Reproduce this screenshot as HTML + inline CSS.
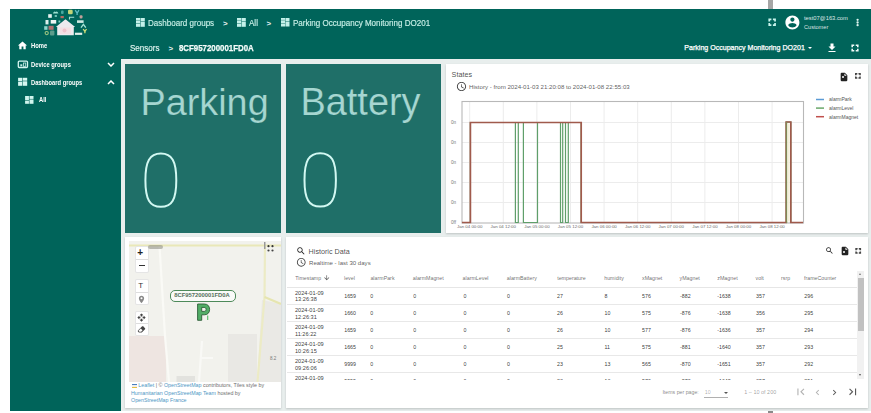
<!DOCTYPE html>
<html><head><meta charset="utf-8">
<style>
*{margin:0;padding:0;box-sizing:border-box}
html,body{width:871px;height:413px;overflow:hidden;background:#fff;font-family:"Liberation Sans",sans-serif}
.a{position:absolute}
.t{white-space:nowrap;line-height:1}
svg{display:block}
</style></head><body>
<div class="a" style="left:768px;top:0;width:5px;height:9px;background:#a6a6a6"></div>
<div class="a" style="left:10px;top:9px;width:861px;height:402px;background:#00645a"></div>
<div class="a" style="left:768px;top:411px;width:5px;height:2px;background:#8a8a8a"></div>
<svg class="a" style="left:136.2px;top:18.1px" width="9.8" height="9.8"><g fill="#c4f1ea"><rect x="0.00" y="0.00" width="4.20" height="1.96"/><rect x="0.00" y="2.35" width="4.20" height="2.93"/><rect x="0.00" y="5.67" width="4.20" height="3.13"/><rect x="4.60" y="0.00" width="4.20" height="3.32"/><rect x="4.60" y="3.72" width="4.20" height="5.08"/></g></svg>
<div class="a t" style="left:148px;top:19.2px;font-size:8.7px;color:#c8efe7;font-weight:normal;-webkit-text-stroke:0.15px #c8efe7;transform:scaleX(0.925);transform-origin:0 0">Dashboard groups</div>
<div class="a t" style="left:223px;top:20.0px;font-size:8px;color:rgba(255,255,255,0.92);font-weight:bold;">&gt;</div>
<svg class="a" style="left:237.1px;top:18.1px" width="9.8" height="9.8"><g fill="#c4f1ea"><rect x="0.00" y="0.00" width="4.20" height="1.96"/><rect x="0.00" y="2.35" width="4.20" height="2.93"/><rect x="0.00" y="5.67" width="4.20" height="3.13"/><rect x="4.60" y="0.00" width="4.20" height="3.32"/><rect x="4.60" y="3.72" width="4.20" height="5.08"/></g></svg>
<div class="a t" style="left:249px;top:19.2px;font-size:8.7px;color:#c8efe7;font-weight:normal;-webkit-text-stroke:0.15px #c8efe7;transform:scaleX(0.925);transform-origin:0 0">All</div>
<div class="a t" style="left:266.5px;top:20.0px;font-size:8px;color:rgba(255,255,255,0.92);font-weight:bold;">&gt;</div>
<svg class="a" style="left:281.3px;top:18.1px" width="9.5" height="9.5"><g fill="#c4f1ea"><rect x="0.00" y="0.00" width="4.06" height="1.89"/><rect x="0.00" y="2.27" width="4.06" height="2.83"/><rect x="0.00" y="5.48" width="4.06" height="3.02"/><rect x="4.44" y="0.00" width="4.06" height="3.21"/><rect x="4.44" y="3.59" width="4.06" height="4.91"/></g></svg>
<div class="a t" style="left:293px;top:19.2px;font-size:8.7px;color:#c8efe7;font-weight:normal;-webkit-text-stroke:0.15px #c8efe7;transform:scaleX(0.925);transform-origin:0 0">Parking Occupancy Monitoring DO201</div>
<svg class="a" style="left:0;top:0" width="871" height="413"><path d="M769.25 21.5 V19.35 H771.4 M772.9 19.35 H775.05 V21.5 M775.05 23.0 V25.15 H772.9 M771.4 25.15 H769.25 V23.0" stroke="#c8f3ec" stroke-width="1.7" fill="none"/></svg>
<svg class="a" style="left:784.1px;top:14.3px" width="16.8" height="16.8" viewBox="0 0 24 24"><path fill="#fff" d="M12 2C6.48 2 2 6.48 2 12s4.48 10 10 10 10-4.48 10-10S17.52 2 12 2zm0 3c1.66 0 3 1.34 3 3s-1.34 3-3 3-3-1.34-3-3 1.34-3 3-3zm0 14.2c-2.5 0-4.71-1.28-6-3.22.03-1.99 4-3.08 6-3.08 1.99 0 5.970 1.09 6 3.08-1.29 1.94-3.5 3.22-6 3.22z"/></svg>
<div class="a t" style="left:804px;top:15.5px;font-size:5.8px;color:rgba(255,255,255,0.88);font-weight:normal;">test07@163.com</div>
<div class="a t" style="left:804px;top:24.5px;font-size:5.6px;color:rgba(255,255,255,0.85);font-weight:normal;">Customer</div>
<svg class="a" style="left:0;top:0" width="871" height="413"><g fill="#dff5f0"><circle cx="857.6" cy="19.8" r="1.15"/><circle cx="857.6" cy="22.5" r="1.15"/><circle cx="857.6" cy="25.2" r="1.15"/></g></svg>
<div class="a t" style="left:129.6px;top:43.9px;font-size:8.7px;color:#e2f6f2;font-weight:normal;-webkit-text-stroke:0.15px #e2f6f2;transform:scaleX(0.925);transform-origin:0 0">Sensors</div>
<div class="a t" style="left:168.4px;top:44.7px;font-size:8px;color:rgba(255,255,255,0.92);font-weight:bold;">&gt;</div>
<div class="a t" style="left:179px;top:43.9px;font-size:8.7px;color:#f4fcfa;font-weight:bold;-webkit-text-stroke:0.25px #f4fcfa;transform:scaleX(0.905);transform-origin:0 0">8CF957200001FD0A</div>
<div class="a t" style="left:684.3px;top:44.2px;font-size:7.07px;color:#fff;font-weight:normal;-webkit-text-stroke:0.25px #fff">Parking Occupancy Monitoring DO201</div>
<div class="a" style="left:808px;top:46.5px;width:0;height:0;border-left:2px solid transparent;border-right:2px solid transparent;border-top:2px solid #fff"></div>
<svg class="a" style="left:826.3px;top:41.6px" width="12" height="12" viewBox="0 0 24 24"><path fill="#fff" d="M19 9h-4V3H9v6H5l7 7 7-7zM5 18v2h14v-2H5z"/></svg>
<svg class="a" style="left:0;top:0" width="871" height="413"><path d="M852.1999999999999 47.28 V45.199999999999996 H854.28 M855.72 45.199999999999996 H857.8000000000001 V47.28 M857.8000000000001 48.72 V50.800000000000004 H855.72 M854.28 50.800000000000004 H852.1999999999999 V48.72" stroke="#f0fbf9" stroke-width="1.6" fill="none"/></svg>
<svg class="a" style="left:17.3px;top:40px" width="11" height="11" viewBox="0 0 24 24"><path fill="#fff" d="M10 20v-6h4v6h5v-8h3L12 3 2 12h3v8z"/></svg>
<div class="a t" style="left:31.3px;top:42.8px;font-size:6.5px;color:#fff;font-weight:bold;transform:scaleX(0.9);transform-origin:0 0">Home</div>
<svg class="a" style="left:0;top:0" width="871" height="413"><rect x="18.3" y="61.1" width="9.2" height="6.4" rx="1" fill="none" stroke="#d6f5f0" stroke-width="1.3"/><rect x="20.3" y="64.3" width="2" height="2" fill="#c6ebe5"/><rect x="23.5" y="63" width="2.2" height="3.3" fill="none" stroke="#c6ebe5" stroke-width="0.8"/></svg>
<div class="a t" style="left:31px;top:61.5px;font-size:6.5px;color:#fff;font-weight:bold;transform:scaleX(0.89);transform-origin:0 0">Device groups</div>
<svg class="a" style="left:107px;top:61.5px" width="8" height="5"><path d="M1 1 L4 4 L7 1" stroke="#fff" stroke-width="1.5" fill="none"/></svg>
<svg class="a" style="left:0;top:0" width="871" height="413"><g fill="#d6f7f1"><rect x="18.10" y="77.80" width="3.93" height="3.33"/><rect x="18.10" y="81.68" width="3.93" height="4.12"/><rect x="22.57" y="77.80" width="4.62" height="2.92"/><rect x="22.57" y="81.28" width="4.62" height="4.52"/></g></svg>
<div class="a t" style="left:31px;top:79.8px;font-size:6.5px;color:#fff;font-weight:bold;transform:scaleX(0.885);transform-origin:0 0">Dashboard groups</div>
<svg class="a" style="left:106.5px;top:79.5px" width="8" height="5"><path d="M1 4 L4 1 L7 4" stroke="#fff" stroke-width="1.5" fill="none"/></svg>
<svg class="a" style="left:0;top:0" width="871" height="413"><g fill="#d0f5ee"><rect x="25.10" y="96.00" width="3.82" height="4.12"/><rect x="25.10" y="100.68" width="3.82" height="3.12"/><rect x="29.47" y="96.00" width="4.03" height="2.92"/><rect x="29.47" y="99.48" width="4.03" height="4.32"/></g></svg>
<div class="a t" style="left:39px;top:97.3px;font-size:6.5px;color:#fff;font-weight:bold;transform:scaleX(0.89);transform-origin:0 0">All</div>
<svg class="a" style="left:0;top:0;filter:blur(0.35px)" width="100" height="40" viewBox="0 0 100 40">
<path d="M55.8 27 L65.5 19.2 L75.2 27 L73.8 27 L73.8 35.2 L57.2 35.2 L57.2 27 Z" fill="#eceaee"/>
<path d="M60 27.5 L71 27.5 L71 34 L60 34 Z" fill="#f3dfe3"/>
<circle cx="64.5" cy="30.5" r="2" fill="#eec2cb"/>
<path d="M52.9 13.5 q1 -2.8 2.8 -1.6 q1.6 -1.2 2.7 1.6 z" fill="#9ee0d2"/>
<rect x="61" y="10.5" width="2.6" height="3.5" rx="1" fill="#4aa8a0"/>
<rect x="68" y="9.8" width="4.7" height="4.4" rx="1.3" fill="#c2d478"/>
<path d="M75.2 10.2 L77.1 13 L79 10.2 M77.1 13 L77.1 14.9" stroke="#62bcc4" stroke-width="1.3" fill="none"/>
<rect x="48.2" y="14.2" width="3.6" height="3.6" fill="#e6f2f0"/>
<rect x="54.7" y="15" width="2.2" height="2" fill="#6fc0b4"/>
<rect x="60.5" y="16" width="3.3" height="2.2" fill="#b86a62"/>
<path d="M69.5 19.6 L69.5 17.2 L74.2 17.2" stroke="#a8e2d8" stroke-width="1.1" fill="none"/>
<rect x="79.6" y="15.3" width="2.9" height="3.2" rx="1" fill="#c0a09a"/>
<rect x="45.5" y="20" width="3" height="4.4" fill="#dcefec"/>
<rect x="50.7" y="20" width="5.5" height="3.6" fill="#eef6f4"/>
<rect x="58.5" y="20.5" width="1.8" height="2" fill="#80cfc4"/>
<rect x="77" y="20.3" width="6.6" height="2.6" fill="#cfeae4"/>
<rect x="44.2" y="26.2" width="3.3" height="3.6" fill="#8ed6cc"/>
<rect x="48.5" y="25.8" width="5.1" height="4" fill="#b07272"/>
<path d="M81 27.6 L83.4 24.3 L85.8 27.6" stroke="#a6e4d6" stroke-width="1.3" fill="none"/>
<circle cx="46.7" cy="33.1" r="1.6" fill="none" stroke="#9cc680" stroke-width="1.1"/>
<rect x="50" y="30.5" width="4.4" height="5.1" rx="1" fill="#5c9c8c"/>
<rect x="74.9" y="32.7" width="7.3" height="2.2" fill="#e2f0ea"/>
<path d="M83.2 29 L84.9 31.5 L86.5 29 M84.9 31.5 L84.9 33.2" stroke="#cede78" stroke-width="1.3" fill="none"/>
</svg>
<div class="a" style="left:121px;top:58.8px;width:750px;height:352.2px;background:#e8eeed"></div>
<div class="a" style="left:125px;top:63.5px;width:156px;height:169px;background:#1f6f68"></div>
<div class="a" style="left:286px;top:63.5px;width:155px;height:169px;background:#1f6f68"></div>
<div class="a" style="left:446px;top:63.5px;width:422px;height:169.5px;background:#fff;box-shadow:0 1px 2px rgba(0,0,0,0.18)"></div>
<div class="a" style="left:125px;top:237px;width:156px;height:170.5px;background:#fff;box-shadow:0 1px 2px rgba(0,0,0,0.18)"></div>
<div class="a" style="left:286px;top:237px;width:582px;height:170.5px;background:#fff;box-shadow:0 1px 2px rgba(0,0,0,0.18)"></div>
<div class="a t" style="left:140.5px;top:84.2px;font-size:37.8px;color:#a6d6d1;font-weight:normal;-webkit-text-stroke:0.2px #1f6f68">Parking</div>
<div class="a t" style="left:300.5px;top:84.0px;font-size:37.9px;color:#a6d6d1;font-weight:normal;-webkit-text-stroke:0.2px #1f6f68">Battery</div>
<svg class="a" style="left:0;top:0" width="871" height="413"><path d="M160.85 153.60 C171.97 153.60 176.30 161.05 176.30 180.20 C176.30 199.35 171.97 206.80 160.85 206.80 C149.73 206.80 145.40 199.35 145.40 180.20 C145.40 161.05 149.73 153.60 160.85 153.60Z" fill="none" stroke="#d2f8f2" stroke-width="2.0"/><path d="M320.20 153.20 C331.50 153.20 335.90 160.68 335.90 179.90 C335.90 199.12 331.50 206.60 320.20 206.60 C308.90 206.60 304.50 199.12 304.50 179.90 C304.50 160.68 308.90 153.20 320.20 153.20Z" fill="none" stroke="#d2f8f2" stroke-width="2.0"/></svg>
<div class="a t" style="left:451.6px;top:70.5px;font-size:7.2px;color:rgba(0,0,0,0.72);font-weight:normal;">States</div>
<svg class="a" style="left:839.3px;top:71.5px" width="10" height="10" viewBox="0 0 24 24"><path fill="#222" d="M14 2H6c-1.1 0-2 .9-2 2v16c0 1.1.9 2 2 2h12c1.1 0 2-.9 2-2V8l-6-6zm-1 7V3.5L18.5 9H13z"/></svg>
<div class="a" style="left:842.3px;top:76.3px;width:2.2px;height:2.2px;border-radius:50%;background:#fff"></div>
<svg class="a" style="left:0;top:0" width="871" height="413"><path d="M855.75 75.32 V73.75 H857.32 M858.4799999999999 73.75 H860.05 V75.32 M860.05 76.48 V78.05 H858.4799999999999 M857.32 78.05 H855.75 V76.48" stroke="#444" stroke-width="1.5" fill="none"/></svg>
<svg class="a" style="left:455.9px;top:81.2px" width="11" height="11" viewBox="0 0 24 24"><path fill="#444" d="M11.99 2C6.47 2 2 6.48 2 12s4.47 10 9.99 10C17.52 22 22 17.52 22 12S17.52 2 11.99 2zM12 20c-4.42 0-8-3.58-8-8s3.58-8 8-8 8 3.58 8 8-3.58 8-8 8zm.5-13H11v6l5.25 3.15.75-1.23-4.5-2.67z"/></svg>
<div class="a t" style="left:469px;top:84px;font-size:6.14px;color:rgba(0,0,0,0.68);font-weight:normal;">History - from 2024-01-03 21:20:08 to 2024-01-08 22:55:03</div>
<svg class="a" style="left:0;top:0" width="871" height="413"><line x1="469.7" y1="102" x2="469.7" y2="223" stroke="#ececec" stroke-width="1"/><line x1="503.3" y1="102" x2="503.3" y2="223" stroke="#ececec" stroke-width="1"/><line x1="536.9" y1="102" x2="536.9" y2="223" stroke="#ececec" stroke-width="1"/><line x1="570.5" y1="102" x2="570.5" y2="223" stroke="#ececec" stroke-width="1"/><line x1="604.1" y1="102" x2="604.1" y2="223" stroke="#ececec" stroke-width="1"/><line x1="637.7" y1="102" x2="637.7" y2="223" stroke="#ececec" stroke-width="1"/><line x1="671.3" y1="102" x2="671.3" y2="223" stroke="#ececec" stroke-width="1"/><line x1="704.9" y1="102" x2="704.9" y2="223" stroke="#ececec" stroke-width="1"/><line x1="738.5" y1="102" x2="738.5" y2="223" stroke="#ececec" stroke-width="1"/><line x1="772.1" y1="102" x2="772.1" y2="223" stroke="#ececec" stroke-width="1"/><line x1="462" y1="122.5" x2="803" y2="122.5" stroke="#ececec" stroke-width="1"/><line x1="462" y1="142.5" x2="803" y2="142.5" stroke="#ececec" stroke-width="1"/><line x1="462" y1="162.5" x2="803" y2="162.5" stroke="#ececec" stroke-width="1"/><line x1="462" y1="182.5" x2="803" y2="182.5" stroke="#ececec" stroke-width="1"/><line x1="462" y1="202.5" x2="803" y2="202.5" stroke="#ececec" stroke-width="1"/><rect x="462" y="101.5" width="341.5" height="121.5" fill="none" stroke="#b8b8b8" stroke-width="1.1"/><text x="451" y="123.8" font-size="4.6" fill="#777" font-family="Liberation Sans">0n</text><text x="451" y="143.8" font-size="4.6" fill="#777" font-family="Liberation Sans">0n</text><text x="451" y="163.8" font-size="4.6" fill="#777" font-family="Liberation Sans">0n</text><text x="451" y="183.8" font-size="4.6" fill="#777" font-family="Liberation Sans">0n</text><text x="451" y="203.8" font-size="4.6" fill="#777" font-family="Liberation Sans">0n</text><text x="451" y="223.8" font-size="4.6" fill="#777" font-family="Liberation Sans">0ff</text><text x="469.7" y="227.8" font-size="4.4" fill="#6a6a6a" text-anchor="middle" font-family="Liberation Sans">Jan 04 00:00</text><text x="503.3" y="227.8" font-size="4.4" fill="#6a6a6a" text-anchor="middle" font-family="Liberation Sans">Jan 04 12:00</text><text x="536.9" y="227.8" font-size="4.4" fill="#6a6a6a" text-anchor="middle" font-family="Liberation Sans">Jan 05 00:00</text><text x="570.5" y="227.8" font-size="4.4" fill="#6a6a6a" text-anchor="middle" font-family="Liberation Sans">Jan 05 12:00</text><text x="604.1" y="227.8" font-size="4.4" fill="#6a6a6a" text-anchor="middle" font-family="Liberation Sans">Jan 06 00:00</text><text x="637.7" y="227.8" font-size="4.4" fill="#6a6a6a" text-anchor="middle" font-family="Liberation Sans">Jan 06 12:00</text><text x="671.3" y="227.8" font-size="4.4" fill="#6a6a6a" text-anchor="middle" font-family="Liberation Sans">Jan 07 00:00</text><text x="704.9" y="227.8" font-size="4.4" fill="#6a6a6a" text-anchor="middle" font-family="Liberation Sans">Jan 07 12:00</text><text x="738.5" y="227.8" font-size="4.4" fill="#6a6a6a" text-anchor="middle" font-family="Liberation Sans">Jan 08 00:00</text><text x="772.1" y="227.8" font-size="4.4" fill="#6a6a6a" text-anchor="middle" font-family="Liberation Sans">Jan 08 12:00</text><polyline fill="none" stroke="#5f9f6a" stroke-width="1.2" points="462,222.5 470.4,222.5 470.4,122.5 515.4,122.5 515.4,222.5 518.3,222.5 518.3,122.5 523.4,122.5 523.4,222.5 537.5,222.5 537.5,122.5 560.5,122.5 560.5,222.5 562.7,222.5 562.7,122.5 565.5,122.5 565.5,222.5 568.3,222.5 568.3,122.5 581.2,122.5 581.2,222.5 786.2,222.5 786.2,122 790.8,122 790.8,222.5 803,222.5"/><polyline fill="none" stroke="#a05a4c" stroke-width="1.7" points="462,222.5 470.4,222.5 470.4,122.5 581.2,122.5 581.2,222.5 786.2,222.5 786.2,122 790.8,122 790.8,222.5 803,222.5"/><line x1="816" y1="99.5" x2="824" y2="99.5" stroke="#5b9bd5" stroke-width="1.5"/><text x="829" y="101.3" font-size="5" fill="#555" font-family="Liberation Sans">alarmPark</text><line x1="816" y1="108.1" x2="824" y2="108.1" stroke="#6aa86a" stroke-width="1.5"/><text x="829" y="109.89999999999999" font-size="5" fill="#555" font-family="Liberation Sans">alarmLevel</text><line x1="816" y1="116.7" x2="824" y2="116.7" stroke="#c0504d" stroke-width="1.5"/><text x="829" y="118.5" font-size="5" fill="#555" font-family="Liberation Sans">alarmMagnet</text><line x1="786.6" y1="122" x2="786.6" y2="223" stroke="#7f8a55" stroke-width="1.3"/><line x1="788.5" y1="123.5" x2="788.5" y2="221.5" stroke="#f3f0d8" stroke-width="2.2"/></svg>
<svg class="a" style="left:129px;top:241px" width="152" height="141" viewBox="129 241 152 141"><rect x="129" y="241" width="152" height="141" fill="#f2f2ed"/><path d="M129 336 L166 336 L166 382 L129 382 Z" fill="#eee5e1"/><path d="M176.5 376 L195 376 L195 382 L176.5 382 Z" fill="#e2e2de"/><path d="M228 334 L257 334 L257 382 L228 382 Z" fill="#e9e8e4"/><path d="M262 300 L281 304 L281 382 L257 382 Z" fill="#eae9e5"/><path d="M159.5 246 L165 336 L169 382" stroke="#fafaf6" stroke-width="2.2" fill="none"/><path d="M202 341 L199 382 M200 358 L213 358" stroke="#f9f9f6" stroke-width="2.2" fill="none"/><path d="M129 245.5 L264 245.5 L281 245.5" stroke="#e9e8b8" stroke-width="2.2" fill="none"/><path d="M265 246 L264.5 297 L257.5 382" stroke="#ecebc5" stroke-width="2.2" fill="none"/><path d="M264.5 297 L281 304" stroke="#e6e5b0" stroke-width="2.2" fill="none"/></svg>
<div class="a t" style="left:270px;top:357px;font-size:4.5px;color:#777;font-weight:normal;">8.2</div>
<div class="a" style="left:134.5px;top:246px;width:14px;height:27px;background:#fff;border:1px solid rgba(0,0,0,0.1);border-radius:2px"></div>
<div class="a" style="left:135.5px;top:259.3px;width:12px;height:1px;background:#ddd"></div>
<div class="a t" style="left:137.3px;top:247.8px;font-size:10px;color:#222;font-weight:bold;">+</div>
<div class="a" style="left:138.5px;top:265px;width:6px;height:1.4px;background:#333"></div>
<div class="a" style="left:134.5px;top:279px;width:14px;height:26px;background:#fff;border:1px solid rgba(0,0,0,0.1);border-radius:2px"></div>
<div class="a" style="left:135.5px;top:292px;width:12px;height:1px;background:#ddd"></div>
<div class="a t" style="left:138.3px;top:281.5px;font-size:8px;color:#333;font-weight:normal;">T</div>
<svg class="a" style="left:138px;top:294.5px" width="7" height="9" viewBox="0 0 24 30"><path d="M12 2C7 2 3 6 3 11c0 7 9 17 9 17s9-10 9-17c0-5-4-9-9-9zm0 12.5a3.5 3.5 0 1 1 0-7 3.5 3.5 0 0 1 0 7z" fill="#888"/></svg>
<div class="a" style="left:134.5px;top:310.5px;width:14px;height:25px;background:#fff;border:1px solid rgba(0,0,0,0.1);border-radius:2px"></div>
<div class="a" style="left:135.5px;top:323px;width:12px;height:1px;background:#ddd"></div>
<svg class="a" style="left:137px;top:312.5px" width="9" height="9" viewBox="0 0 24 24"><path d="M10 9h4V6h3l-5-5-5 5h3v3zm-1 1H6V7l-5 5 5 5v-3h3v-4zm14 2l-5-5v3h-3v4h3v3l5-5zm-9 3h-4v3H7l5 5 5-5h-3v-3z" fill="#444"/></svg>
<svg class="a" style="left:137px;top:325px" width="9" height="9" viewBox="0 0 24 24"><path d="M15.14 3c-.51 0-1.02.2-1.41.59L2.59 14.73c-.78.77-.78 2.04 0 2.83L5.03 20h7.66l8.72-8.73c.78-.77.78-2.04 0-2.83l-4.85-4.85c-.39-.39-.91-.59-1.42-.59zM6.44 18.2L4 15.66l6.04-6.04 4.7 4.7-3.72 3.88H6.44z" fill="#444"/></svg>
<svg class="a" style="left:262px;top:241px" width="14" height="13"><rect x="2" y="1" width="1.5" height="7" fill="#999"/><circle cx="6.5" cy="5.2" r="1.1" fill="#333"/><circle cx="10.5" cy="5.2" r="1.1" fill="#333"/><circle cx="6.5" cy="9.5" r="1.1" fill="#444"/><circle cx="10.5" cy="9.5" r="1.1" fill="#444"/></svg>
<div class="a" style="left:148.3px;top:244.6px;width:14.5px;height:4.2px;background:#8a8a80;border-radius:2px;opacity:0.55"></div>
<div class="a" style="left:169.8px;top:289.7px;width:66px;height:12px;border:1.5px solid #4e8a5a;border-radius:5px;background:rgba(255,255,255,0.6)"></div>
<div class="a t" style="left:174.2px;top:293px;font-size:5.85px;color:#56705c;font-weight:bold;">8CF957200001FD0A</div>
<svg class="a" style="left:0;top:0" width="871" height="413"><path fill-rule="evenodd" d="M197.6 304 H204.4 C207.8 304 209.6 306.4 209.6 309.4 C209.6 312.5 207.8 314.8 204.4 314.8 H201.7 V320.3 H197.6 Z M201.7 307.4 H204.1 C205.4 307.4 206.1 308.3 206.1 309.4 C206.1 310.5 205.4 311.4 204.1 311.4 H201.7 Z" fill="#52ad66" stroke="#2c5e38" stroke-width="0.9"/><rect x="207" y="315.5" width="1.3" height="4.5" fill="#6cc47c"/></svg>
<div class="a" style="left:131.5px;top:384.2px;width:5.5px;height:3.6px;background:linear-gradient(#4a7fc0 33%,#eee 33%,#eee 66%,#e8c040 66%)"></div>
<div class="a t" style="left:138.3px;top:383.2px;font-size:5.32px;color:#6e6e6e"><span style="color:#4f97c4">Leaflet</span> | © <span style="color:#4f97c4">OpenStreetMap</span> contributors, Tiles style by</div>
<div class="a t" style="left:131px;top:390.6px;font-size:5.32px;color:#6e6e6e"><span style="color:#4f97c4">Humanitarian OpenStreetMap Team</span> hosted by</div>
<div class="a t" style="left:131px;top:397.8px;font-size:5.32px;color:#4f97c4">OpenStreetMap France</div>
<svg class="a" style="left:296px;top:246.2px" width="10" height="10" viewBox="0 0 24 24"><path fill="#222" d="M15.5 14h-.79l-.28-.27C15.41 12.59 16 11.11 16 9.5 16 5.91 13.09 3 9.5 3S3 5.91 3 9.5 5.91 16 9.5 16c1.61 0 3.090-.59 4.23-1.57l.27.28v.79l5 4.99L20.49 19l-4.99-5zm-6 0C7.01 14 5 11.99 5 9.5S7.01 5 9.5 5 14 7.01 14 9.5 11.99 14 9.5 14z"/></svg>
<div class="a t" style="left:308.6px;top:247.5px;font-size:7.2px;color:rgba(0,0,0,0.72);font-weight:normal;">Historic Data</div>
<svg class="a" style="left:296.2px;top:257.3px" width="10.5" height="10.5" viewBox="0 0 24 24"><path fill="#444" d="M11.99 2C6.47 2 2 6.48 2 12s4.47 10 9.99 10C17.52 22 22 17.52 22 12S17.52 2 11.99 2zM12 20c-4.42 0-8-3.58-8-8s3.58-8 8-8 8 3.58 8 8-3.58 8-8 8zm.5-13H11v6l5.25 3.15.75-1.23-4.5-2.67z"/></svg>
<div class="a t" style="left:309px;top:260px;font-size:6.07px;color:rgba(0,0,0,0.68);font-weight:normal;">Realtime - last 30 days</div>
<svg class="a" style="left:825.2px;top:246.3px" width="9" height="9" viewBox="0 0 24 24"><path fill="#222" d="M15.5 14h-.79l-.28-.27C15.41 12.59 16 11.11 16 9.5 16 5.91 13.09 3 9.5 3S3 5.91 3 9.5 5.91 16 9.5 16c1.61 0 3.090-.59 4.23-1.57l.27.28v.79l5 4.99L20.49 19l-4.99-5zm-6 0C7.01 14 5 11.99 5 9.5S7.01 5 9.5 5 14 7.01 14 9.5 11.99 14 9.5 14z"/></svg>
<svg class="a" style="left:839.5px;top:246px" width="10" height="10" viewBox="0 0 24 24"><path fill="#222" d="M14 2H6c-1.1 0-2 .9-2 2v16c0 1.1.9 2 2 2h12c1.1 0 2-.9 2-2V8l-6-6zm-1 7V3.5L18.5 9H13z"/></svg>
<div class="a" style="left:842.5px;top:250.8px;width:2.2px;height:2.2px;border-radius:50%;background:#fff"></div>
<svg class="a" style="left:0;top:0" width="871" height="413"><path d="M856.05 250.32 V248.75 H857.62 M858.7799999999999 248.75 H860.3499999999999 V250.32 M860.3499999999999 251.48000000000002 V253.05 H858.7799999999999 M857.62 253.05 H856.05 V251.48000000000002" stroke="#444" stroke-width="1.5" fill="none"/></svg>
<div class="a t" style="left:295.2px;top:275.5px;font-size:5.3px;color:rgba(0,0,0,0.6);font-weight:normal;">Timestamp</div>
<div class="a t" style="left:344px;top:275.5px;font-size:5.3px;color:rgba(0,0,0,0.6);font-weight:normal;">level</div>
<div class="a t" style="left:370.4px;top:275.5px;font-size:5.3px;color:rgba(0,0,0,0.6);font-weight:normal;">alarmPark</div>
<div class="a t" style="left:412.8px;top:275.5px;font-size:5.3px;color:rgba(0,0,0,0.6);font-weight:normal;">alarmMagnet</div>
<div class="a t" style="left:462.6px;top:275.5px;font-size:5.3px;color:rgba(0,0,0,0.6);font-weight:normal;">alarmLevel</div>
<div class="a t" style="left:506.8px;top:275.5px;font-size:5.3px;color:rgba(0,0,0,0.6);font-weight:normal;">alarmBattery</div>
<div class="a t" style="left:557.2px;top:275.5px;font-size:5.3px;color:rgba(0,0,0,0.6);font-weight:normal;">temperature</div>
<div class="a t" style="left:604.2px;top:275.5px;font-size:5.3px;color:rgba(0,0,0,0.6);font-weight:normal;">humidity</div>
<div class="a t" style="left:642px;top:275.5px;font-size:5.3px;color:rgba(0,0,0,0.6);font-weight:normal;">xMagnet</div>
<div class="a t" style="left:679.5px;top:275.5px;font-size:5.3px;color:rgba(0,0,0,0.6);font-weight:normal;">yMagnet</div>
<div class="a t" style="left:717.3px;top:275.5px;font-size:5.3px;color:rgba(0,0,0,0.6);font-weight:normal;">zMagnet</div>
<div class="a t" style="left:755.6px;top:275.5px;font-size:5.3px;color:rgba(0,0,0,0.6);font-weight:normal;">volt</div>
<div class="a t" style="left:781px;top:275.5px;font-size:5.3px;color:rgba(0,0,0,0.6);font-weight:normal;">rsrp</div>
<div class="a t" style="left:804px;top:275.5px;font-size:5.3px;color:rgba(0,0,0,0.6);font-weight:normal;">frameCounter</div>
<svg class="a" style="left:322.6px;top:273.8px" width="7.5" height="7.5" viewBox="0 0 24 24"><path d="M20 12l-1.41-1.41L13 16.17V4h-2v12.17l-5.58-5.59L4 12l8 8 8-8z" fill="#555"/></svg>
<div class="a" style="left:287px;top:286.6px;width:570px;height:1px;background:#e6e6e6"></div>
<div class="a" style="left:286px;top:287px;width:571px;height:92.5px;overflow:hidden"><div class="a t" style="left:9px;top:3.8px;font-size:5.6px;color:rgba(0,0,0,0.8)">2024-01-09</div><div class="a t" style="left:9px;top:10.4px;font-size:5.6px;color:rgba(0,0,0,0.8)">13:26:38</div><div class="a t" style="left:58.19999999999999px;top:6.7px;font-size:5.3px;color:rgba(0,0,0,0.8)">1659</div><div class="a t" style="left:84.30000000000001px;top:6.7px;font-size:5.3px;color:rgba(0,0,0,0.8)">0</div><div class="a t" style="left:127.30000000000001px;top:6.7px;font-size:5.3px;color:rgba(0,0,0,0.8)">0</div><div class="a t" style="left:177.5px;top:6.7px;font-size:5.3px;color:rgba(0,0,0,0.8)">0</div><div class="a t" style="left:221px;top:6.7px;font-size:5.3px;color:rgba(0,0,0,0.8)">0</div><div class="a t" style="left:271.1px;top:6.7px;font-size:5.3px;color:rgba(0,0,0,0.8)">27</div><div class="a t" style="left:318.5px;top:6.7px;font-size:5.3px;color:rgba(0,0,0,0.8)">8</div><div class="a t" style="left:356px;top:6.7px;font-size:5.3px;color:rgba(0,0,0,0.8)">576</div><div class="a t" style="left:394px;top:6.7px;font-size:5.3px;color:rgba(0,0,0,0.8)">-882</div><div class="a t" style="left:431.20000000000005px;top:6.7px;font-size:5.3px;color:rgba(0,0,0,0.8)">-1638</div><div class="a t" style="left:470px;top:6.7px;font-size:5.3px;color:rgba(0,0,0,0.8)">357</div><div class="a t" style="left:518.3px;top:6.7px;font-size:5.3px;color:rgba(0,0,0,0.8)">296</div><div class="a" style="left:1px;top:17.0px;width:570px;height:1px;background:#e8e8e8"></div><div class="a t" style="left:9px;top:20.900000000000023px;font-size:5.6px;color:rgba(0,0,0,0.8)">2024-01-09</div><div class="a t" style="left:9px;top:27.50000000000002px;font-size:5.6px;color:rgba(0,0,0,0.8)">12:26:31</div><div class="a t" style="left:58.19999999999999px;top:23.800000000000022px;font-size:5.3px;color:rgba(0,0,0,0.8)">1660</div><div class="a t" style="left:84.30000000000001px;top:23.800000000000022px;font-size:5.3px;color:rgba(0,0,0,0.8)">0</div><div class="a t" style="left:127.30000000000001px;top:23.800000000000022px;font-size:5.3px;color:rgba(0,0,0,0.8)">0</div><div class="a t" style="left:177.5px;top:23.800000000000022px;font-size:5.3px;color:rgba(0,0,0,0.8)">0</div><div class="a t" style="left:221px;top:23.800000000000022px;font-size:5.3px;color:rgba(0,0,0,0.8)">0</div><div class="a t" style="left:271.1px;top:23.800000000000022px;font-size:5.3px;color:rgba(0,0,0,0.8)">26</div><div class="a t" style="left:318.5px;top:23.800000000000022px;font-size:5.3px;color:rgba(0,0,0,0.8)">10</div><div class="a t" style="left:356px;top:23.800000000000022px;font-size:5.3px;color:rgba(0,0,0,0.8)">575</div><div class="a t" style="left:394px;top:23.800000000000022px;font-size:5.3px;color:rgba(0,0,0,0.8)">-876</div><div class="a t" style="left:431.20000000000005px;top:23.800000000000022px;font-size:5.3px;color:rgba(0,0,0,0.8)">-1638</div><div class="a t" style="left:470px;top:23.800000000000022px;font-size:5.3px;color:rgba(0,0,0,0.8)">356</div><div class="a t" style="left:518.3px;top:23.800000000000022px;font-size:5.3px;color:rgba(0,0,0,0.8)">295</div><div class="a" style="left:1px;top:34.10000000000002px;width:570px;height:1px;background:#e8e8e8"></div><div class="a t" style="left:9px;top:37.999999999999986px;font-size:5.6px;color:rgba(0,0,0,0.8)">2024-01-09</div><div class="a t" style="left:9px;top:44.59999999999999px;font-size:5.6px;color:rgba(0,0,0,0.8)">11:26:22</div><div class="a t" style="left:58.19999999999999px;top:40.89999999999999px;font-size:5.3px;color:rgba(0,0,0,0.8)">1659</div><div class="a t" style="left:84.30000000000001px;top:40.89999999999999px;font-size:5.3px;color:rgba(0,0,0,0.8)">0</div><div class="a t" style="left:127.30000000000001px;top:40.89999999999999px;font-size:5.3px;color:rgba(0,0,0,0.8)">0</div><div class="a t" style="left:177.5px;top:40.89999999999999px;font-size:5.3px;color:rgba(0,0,0,0.8)">0</div><div class="a t" style="left:221px;top:40.89999999999999px;font-size:5.3px;color:rgba(0,0,0,0.8)">0</div><div class="a t" style="left:271.1px;top:40.89999999999999px;font-size:5.3px;color:rgba(0,0,0,0.8)">26</div><div class="a t" style="left:318.5px;top:40.89999999999999px;font-size:5.3px;color:rgba(0,0,0,0.8)">10</div><div class="a t" style="left:356px;top:40.89999999999999px;font-size:5.3px;color:rgba(0,0,0,0.8)">577</div><div class="a t" style="left:394px;top:40.89999999999999px;font-size:5.3px;color:rgba(0,0,0,0.8)">-876</div><div class="a t" style="left:431.20000000000005px;top:40.89999999999999px;font-size:5.3px;color:rgba(0,0,0,0.8)">-1636</div><div class="a t" style="left:470px;top:40.89999999999999px;font-size:5.3px;color:rgba(0,0,0,0.8)">357</div><div class="a t" style="left:518.3px;top:40.89999999999999px;font-size:5.3px;color:rgba(0,0,0,0.8)">294</div><div class="a" style="left:1px;top:51.19999999999999px;width:570px;height:1px;background:#e8e8e8"></div><div class="a t" style="left:9px;top:55.10000000000001px;font-size:5.6px;color:rgba(0,0,0,0.8)">2024-01-09</div><div class="a t" style="left:9px;top:61.70000000000001px;font-size:5.6px;color:rgba(0,0,0,0.8)">10:26:15</div><div class="a t" style="left:58.19999999999999px;top:58.000000000000014px;font-size:5.3px;color:rgba(0,0,0,0.8)">1665</div><div class="a t" style="left:84.30000000000001px;top:58.000000000000014px;font-size:5.3px;color:rgba(0,0,0,0.8)">0</div><div class="a t" style="left:127.30000000000001px;top:58.000000000000014px;font-size:5.3px;color:rgba(0,0,0,0.8)">0</div><div class="a t" style="left:177.5px;top:58.000000000000014px;font-size:5.3px;color:rgba(0,0,0,0.8)">0</div><div class="a t" style="left:221px;top:58.000000000000014px;font-size:5.3px;color:rgba(0,0,0,0.8)">0</div><div class="a t" style="left:271.1px;top:58.000000000000014px;font-size:5.3px;color:rgba(0,0,0,0.8)">25</div><div class="a t" style="left:318.5px;top:58.000000000000014px;font-size:5.3px;color:rgba(0,0,0,0.8)">11</div><div class="a t" style="left:356px;top:58.000000000000014px;font-size:5.3px;color:rgba(0,0,0,0.8)">575</div><div class="a t" style="left:394px;top:58.000000000000014px;font-size:5.3px;color:rgba(0,0,0,0.8)">-881</div><div class="a t" style="left:431.20000000000005px;top:58.000000000000014px;font-size:5.3px;color:rgba(0,0,0,0.8)">-1640</div><div class="a t" style="left:470px;top:58.000000000000014px;font-size:5.3px;color:rgba(0,0,0,0.8)">357</div><div class="a t" style="left:518.3px;top:58.000000000000014px;font-size:5.3px;color:rgba(0,0,0,0.8)">293</div><div class="a" style="left:1px;top:68.30000000000001px;width:570px;height:1px;background:#e8e8e8"></div><div class="a t" style="left:9px;top:72.19999999999997px;font-size:5.6px;color:rgba(0,0,0,0.8)">2024-01-09</div><div class="a t" style="left:9px;top:78.79999999999998px;font-size:5.6px;color:rgba(0,0,0,0.8)">09:26:06</div><div class="a t" style="left:58.19999999999999px;top:75.09999999999998px;font-size:5.3px;color:rgba(0,0,0,0.8)">9999</div><div class="a t" style="left:84.30000000000001px;top:75.09999999999998px;font-size:5.3px;color:rgba(0,0,0,0.8)">0</div><div class="a t" style="left:127.30000000000001px;top:75.09999999999998px;font-size:5.3px;color:rgba(0,0,0,0.8)">0</div><div class="a t" style="left:177.5px;top:75.09999999999998px;font-size:5.3px;color:rgba(0,0,0,0.8)">0</div><div class="a t" style="left:221px;top:75.09999999999998px;font-size:5.3px;color:rgba(0,0,0,0.8)">0</div><div class="a t" style="left:271.1px;top:75.09999999999998px;font-size:5.3px;color:rgba(0,0,0,0.8)">23</div><div class="a t" style="left:318.5px;top:75.09999999999998px;font-size:5.3px;color:rgba(0,0,0,0.8)">13</div><div class="a t" style="left:356px;top:75.09999999999998px;font-size:5.3px;color:rgba(0,0,0,0.8)">565</div><div class="a t" style="left:394px;top:75.09999999999998px;font-size:5.3px;color:rgba(0,0,0,0.8)">-870</div><div class="a t" style="left:431.20000000000005px;top:75.09999999999998px;font-size:5.3px;color:rgba(0,0,0,0.8)">-1651</div><div class="a t" style="left:470px;top:75.09999999999998px;font-size:5.3px;color:rgba(0,0,0,0.8)">357</div><div class="a t" style="left:518.3px;top:75.09999999999998px;font-size:5.3px;color:rgba(0,0,0,0.8)">292</div><div class="a" style="left:1px;top:85.39999999999998px;width:570px;height:1px;background:#e8e8e8"></div><div class="a t" style="left:9px;top:89.3px;font-size:5.6px;color:rgba(0,0,0,0.8)">2024-01-09</div><div class="a t" style="left:9px;top:95.9px;font-size:5.6px;color:rgba(0,0,0,0.8)">08:26:00</div><div class="a t" style="left:58.19999999999999px;top:92.2px;font-size:5.3px;color:rgba(0,0,0,0.8)">9999</div><div class="a t" style="left:84.30000000000001px;top:92.2px;font-size:5.3px;color:rgba(0,0,0,0.8)">0</div><div class="a t" style="left:127.30000000000001px;top:92.2px;font-size:5.3px;color:rgba(0,0,0,0.8)">0</div><div class="a t" style="left:177.5px;top:92.2px;font-size:5.3px;color:rgba(0,0,0,0.8)">0</div><div class="a t" style="left:221px;top:92.2px;font-size:5.3px;color:rgba(0,0,0,0.8)">0</div><div class="a t" style="left:271.1px;top:92.2px;font-size:5.3px;color:rgba(0,0,0,0.8)">23</div><div class="a t" style="left:318.5px;top:92.2px;font-size:5.3px;color:rgba(0,0,0,0.8)">13</div><div class="a t" style="left:356px;top:92.2px;font-size:5.3px;color:rgba(0,0,0,0.8)">570</div><div class="a t" style="left:394px;top:92.2px;font-size:5.3px;color:rgba(0,0,0,0.8)">-870</div><div class="a t" style="left:431.20000000000005px;top:92.2px;font-size:5.3px;color:rgba(0,0,0,0.8)">-1648</div><div class="a t" style="left:470px;top:92.2px;font-size:5.3px;color:rgba(0,0,0,0.8)">357</div><div class="a t" style="left:518.3px;top:92.2px;font-size:5.3px;color:rgba(0,0,0,0.8)">291</div><div class="a" style="left:1px;top:102.5px;width:570px;height:1px;background:#e8e8e8"></div></div>
<div class="a" style="left:857px;top:271px;width:7px;height:108px;background:#f1f1f1"></div>
<div class="a" style="left:857.5px;top:278px;width:6px;height:53px;background:#c1c1c1"></div>
<div class="a" style="left:858.7px;top:273px;width:0;height:0;border-left:1.8px solid transparent;border-right:1.8px solid transparent;border-bottom:2px solid #777"></div>
<div class="a" style="left:858.7px;top:373.5px;width:0;height:0;border-left:1.8px solid transparent;border-right:1.8px solid transparent;border-top:2px solid #555"></div>
<div class="a t" style="left:662.4px;top:389.9px;font-size:5.24px;color:rgba(0,0,0,0.5);font-weight:normal;">Items per page:</div>
<div class="a t" style="left:704.8px;top:389.9px;font-size:5.3px;color:rgba(0,0,0,0.35);font-weight:normal;">10</div>
<div class="a" style="left:704px;top:396.5px;width:24px;height:0.8px;background:#b0b0b0"></div>
<div class="a" style="left:723.5px;top:391.5px;width:0;height:0;border-left:2px solid transparent;border-right:2px solid transparent;border-top:2px solid #555"></div>
<div class="a t" style="left:744.3px;top:389.9px;font-size:5.48px;color:rgba(0,0,0,0.4);font-weight:normal;">1 – 10 of 200</div>
<svg class="a" style="left:793.7px;top:385.3px" width="13.5" height="13.5" viewBox="0 0 24 24"><path fill="rgba(0,0,0,0.3)" d="M18.41 16.59L13.82 12l4.59-4.59L17 6l-6 6 6 6zM6 6h2v12H6z"/></svg>
<svg class="a" style="left:811.5px;top:386.5px" width="11" height="11" viewBox="0 0 24 24"><path fill="rgba(0,0,0,0.3)" d="M15.41 7.41L14 6l-6 6 6 6 1.41-1.41L10.83 12z"/></svg>
<svg class="a" style="left:829px;top:386.5px" width="11" height="11" viewBox="0 0 24 24"><path fill="rgba(0,0,0,0.65)" d="M10 6L8.59 7.41 13.17 12l-4.58 4.59L10 18l6-6z"/></svg>
<svg class="a" style="left:845.9px;top:385.3px" width="13.5" height="13.5" viewBox="0 0 24 24"><path fill="rgba(0,0,0,0.65)" d="M5.59 7.41L10.18 12l-4.59 4.59L7 18l6-6-6-6zM16 6h2v12h-2z"/></svg>
</body></html>
